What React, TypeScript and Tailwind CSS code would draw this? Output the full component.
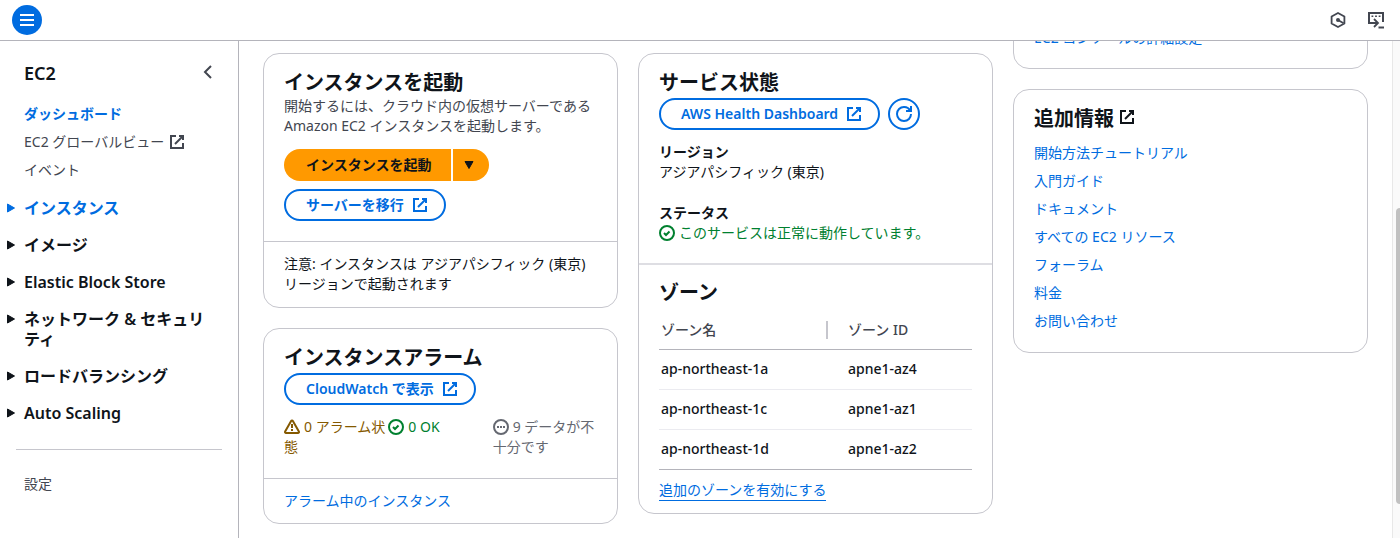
import React from "react";

type IconProps = { className?: string };

function ExternalIcon({ className = "" }: IconProps) {
  return (
    <svg viewBox="0 0 16 16" className={`size-4 shrink-0 ${className}`} fill="none" stroke="currentColor" strokeWidth="2" aria-hidden="true">
      <path d="M10 2h4v4" />
      <path d="m6 10 8-8" />
      <path d="M14 9.05V14H2V2h5" />
    </svg>
  );
}

function CheckIcon() {
  return (
    <svg viewBox="0 0 16 16" className="mr-1 inline-block size-4 align-[-3px]" fill="none" stroke="currentColor" strokeWidth="2" aria-hidden="true">
      <circle cx="8" cy="8" r="7" />
      <path d="m5 8 2 2 3.52-3.52" />
    </svg>
  );
}

function WarningIcon() {
  return (
    <svg viewBox="0 0 16 16" className="mr-1 inline-block size-4 align-[-3px]" fill="none" stroke="currentColor" strokeWidth="2" strokeLinejoin="round" aria-hidden="true">
      <path d="M7.13 1.98 1.14 12.52C.76 13.19 1.24 14 2.01 14h11.98c.77 0 1.25-.81.87-1.48L8.87 1.98a1 1 0 0 0-1.74 0Z" />
      <path d="M8 5v4M8 10v2" />
    </svg>
  );
}

function PendingIcon() {
  return (
    <svg viewBox="0 0 16 16" className="mr-1 inline-block size-4 align-[-3px]" fill="none" stroke="currentColor" strokeWidth="2" aria-hidden="true">
      <circle cx="8" cy="8" r="7" />
      <path d="M4 8h2M7 8h2M10 8h2" />
    </svg>
  );
}

function Card({ children, className = "" }: { children: React.ReactNode; className?: string }) {
  return <section className={`rounded-2xl border border-[#c6c6cd] bg-white ${className}`}>{children}</section>;
}

function CardTitle({ children }: { children: React.ReactNode }) {
  return <h2 className="flex items-center text-xl leading-[26px] font-semibold">{children}</h2>;
}

function OutlineLink({ children }: { children: React.ReactNode }) {
  return (
    <a href="#" className="inline-flex h-8 items-center gap-2 rounded-full border-2 border-[#006ce0] pr-4 pl-5 font-semibold text-[#006ce0]">
      {children}
      <ExternalIcon />
    </a>
  );
}

const sections = [
  { label: "インスタンス", active: true },
  { label: "イメージ" },
  { label: "Elastic Block Store" },
  { label: "ネットワーク & セキュリティ" },
  { label: "ロードバランシング" },
  { label: "Auto Scaling" },
];

const zones = [
  ["ap-northeast-1a", "apne1-az4"],
  ["ap-northeast-1c", "apne1-az1"],
  ["ap-northeast-1d", "apne1-az2"],
];

const resources = ["開始方法チュートリアル", "入門ガイド", "ドキュメント", "すべての EC2 リソース", "フォーラム", "料金", "お問い合わせ"];

function Header() {
  return (
    <header className="flex h-[41px] shrink-0 items-center justify-between border-b border-[#b4b4bb] pr-[15px] pl-3">
      <button aria-label="メニュー" className="flex size-[30px] items-center justify-center rounded-full bg-[#006ce0] text-white">
        <svg viewBox="0 0 16 16" className="size-4" stroke="currentColor" strokeWidth="2" aria-hidden="true">
          <path d="M1 3h14M1 8h14M1 13h14" />
        </svg>
      </button>
      <div className="flex items-center gap-[21px] text-[#424650]">
        <button aria-label="Amazon Q">
          <svg viewBox="0 0 16 16" className="block size-4" fill="none" stroke="currentColor" strokeWidth="1.8" strokeLinejoin="round" aria-hidden="true">
            <path d="M8 1 14.4 4.5v7L8 15l-6.4-3.5v-7Z" />
            <circle cx="8" cy="8" r="2" fill="currentColor" stroke="none" />
            <path d="m8 8 5.6 3.2" />
          </svg>
        </button>
        <button aria-label="CloudShell">
          <svg viewBox="0 0 18 18" className="block size-[18px]" fill="none" stroke="currentColor" strokeWidth="2" aria-hidden="true">
            <path d="M5 12H2V2h14v9" />
            <path d="M4.5 5.2h1.8M8.1 5.2h1.8M11.7 5.2h1.8" strokeWidth="1.6" />
            <path d="M4 12h6M7 8l4 4-4 4" strokeWidth="1.8" />
            <path d="M11.5 16.5H17" />
          </svg>
        </button>
      </div>
    </header>
  );
}

function Sidebar() {
  return (
    <nav aria-label="EC2" className="w-[239px] shrink-0 border-r border-[#b4b4bb]">
      <div className="flex items-start justify-between pt-5 pr-[22px] pl-6">
        <h1 className="text-lg leading-6 font-semibold">EC2</h1>
        <button aria-label="閉じる" className="mt-[3px] text-[#424650]">
          <svg viewBox="0 0 16 16" className="block size-4" fill="none" stroke="currentColor" strokeWidth="2" aria-hidden="true">
            <path d="m11 2-6 6 6 6" />
          </svg>
        </button>
      </div>
      <ul className="mt-[19px] flex flex-col gap-2 pl-6 text-[#424650]">
        <li><a href="#" className="font-semibold text-[#006ce0]">ダッシュボード</a></li>
        <li><a href="#" className="flex items-center gap-[5px]">EC2 グローバルビュー<ExternalIcon /></a></li>
        <li><a href="#">イベント</a></li>
      </ul>
      <ul className="mt-[18px] flex flex-col gap-[17px] pr-6 pl-[7px]">
        {sections.map((s) => (
          <li key={s.label}>
            <button className={`flex items-start gap-[9px] text-left text-base leading-5 font-semibold ${s.active ? "text-[#006ce0]" : ""}`}>
              <svg viewBox="0 0 8 10" className="mt-[5px] h-[10px] w-2 shrink-0" fill="currentColor" stroke="currentColor" strokeLinejoin="round" aria-hidden="true">
                <path d="M.5 1v8l7-4Z" />
              </svg>
              <span>{s.label}</span>
            </button>
          </li>
        ))}
      </ul>
      <hr className="mx-4 mt-[26px] border-[#c6c6cd]" />
      <a href="#" className="mt-6 block pl-6 text-[#424650]">設定</a>
    </nav>
  );
}

function LaunchCard() {
  return (
    <Card>
      <div className="px-5 pt-4 pb-5">
        <CardTitle>インスタンスを起動</CardTitle>
        <p className="text-[#424650]">開始するには、クラウド内の仮想サーバーである Amazon EC2 インスタンスを起動します。</p>
        <div className="mt-[13px] flex h-8 gap-0.5 font-semibold">
          <button className="rounded-l-full bg-[#ff9900] pr-5 pl-[22px]">インスタンスを起動</button>
          <button aria-label="その他のオプション" className="flex w-9 items-center rounded-r-full bg-[#ff9900] pl-[11px]">
            <svg viewBox="0 0 10 8" className="h-2 w-[10px]" fill="currentColor" stroke="currentColor" strokeLinejoin="round" aria-hidden="true">
              <path d="M1 .5h8l-4 7Z" />
            </svg>
          </button>
        </div>
        <div className="mt-2 flex"><OutlineLink>サーバーを移行</OutlineLink></div>
      </div>
      <p className="border-t border-[#c6c6cd] px-5 pt-3 pb-[13px]">注意: インスタンスは アジアパシフィック (東京) リージョンで起動されます</p>
    </Card>
  );
}

function AlarmCard() {
  return (
    <Card>
      <div className="px-5 pt-4 pb-[21px]">
        <CardTitle>インスタンスアラーム</CardTitle>
        <div className="mt-0.5 flex"><OutlineLink>CloudWatch で表示</OutlineLink></div>
        <div className="mt-3 grid grid-cols-3">
          <p className="text-[#855900]"><WarningIcon />0 アラーム状態</p>
          <p className="text-[#00802f]"><CheckIcon />0 OK</p>
          <p className="text-[#656871]"><PendingIcon />9 データが不十分です</p>
        </div>
      </div>
      <div className="border-t border-[#c6c6cd] px-5 py-3">
        <a href="#" className="text-[#006ce0]">アラーム中のインスタンス</a>
      </div>
    </Card>
  );
}

function HealthCard() {
  return (
    <Card>
      <div className="px-5 pt-4 pb-5">
        <CardTitle>サービス状態</CardTitle>
        <div className="mt-0.5 flex gap-2">
          <OutlineLink>AWS Health Dashboard</OutlineLink>
          <button aria-label="更新" className="flex size-8 items-center justify-center rounded-full border-2 border-[#006ce0] text-[#006ce0]">
            <svg viewBox="0 0 16 16" className="size-4" fill="none" stroke="currentColor" strokeWidth="2" aria-hidden="true">
              <path d="M10 5h5V0" />
              <path d="M15 8a6.96 6.96 0 0 1-7 7 6.96 6.96 0 0 1-7-7 6.96 6.96 0 0 1 7-7 6.87 6.87 0 0 1 6.3 4" />
            </svg>
          </button>
        </div>
        <dl className="mt-3">
          <dt className="font-semibold">リージョン</dt>
          <dd>アジアパシフィック (東京)</dd>
          <dt className="mt-[21px] font-semibold">ステータス</dt>
          <dd className="text-[#00802f]"><CheckIcon />このサービスは正常に動作しています。</dd>
        </dl>
      </div>
      <div className="border-t-2 border-[#dedee3] px-5 pt-[15px] pb-3">
        <CardTitle>ゾーン</CardTitle>
        <table className="mt-1.5 w-full table-fixed border-collapse text-left font-medium">
          <thead className="text-[#424650]">
            <tr className="h-[37px] border-b border-[#b4b4bb]">
              <th className="w-[54%] p-0 pl-0.5 font-medium">
                <span className="flex h-[18px] items-center border-r-2 border-[#c6c6cd]">ゾーン名</span>
              </th>
              <th className="p-0 pl-5 font-medium">ゾーン ID</th>
            </tr>
          </thead>
          <tbody>
            {zones.map(([name, id]) => (
              <tr key={name} className="h-10 border-b border-[#ebebf0] last:border-[#b4b4bb]">
                <td className="p-0 pl-0.5">{name}</td>
                <td className="p-0 pl-5">{id}</td>
              </tr>
            ))}
          </tbody>
        </table>
        <a href="#" className="mt-2.5 block w-fit border-b border-[#006ce0] text-[#006ce0]">追加のゾーンを有効にする</a>
      </div>
    </Card>
  );
}

export default function App() {
  return (
    <div className="flex h-screen flex-col overflow-hidden bg-white font-['Noto_Sans','Noto_Sans_CJK_JP',sans-serif] text-sm leading-5 text-[#0f141a]" lang="ja">
      <Header />
      <div className="flex min-h-0 flex-1">
        <Sidebar />
        <main className="grid min-w-0 flex-1 grid-cols-3 items-start gap-5 overflow-hidden px-6 pt-3">
          <div className="flex flex-col gap-5">
            <LaunchCard />
            <AlarmCard />
          </div>
          <HealthCard />
          <div className="-mt-[46px] flex flex-col gap-5">
            <Card className="p-5">
              <a href="#" className="block text-[#006ce0]">EC2 コンソールの詳細設定</a>
            </Card>
            <Card className="px-5 pt-4 pb-[21px]">
              <CardTitle>追加情報<ExternalIcon className="mb-1 ml-[5px]" /></CardTitle>
              <ul className="mt-[11px] flex flex-col gap-2">
                {resources.map((r) => (
                  <li key={r}><a href="#" className="text-[#006ce0]">{r}</a></li>
                ))}
              </ul>
            </Card>
          </div>
        </main>
        <div className="flex w-2 shrink-0 flex-col overflow-hidden border-l border-[#e8e8e8] bg-[#fafafa] pt-[167px] pl-[3px]">
          <div className="h-[296px] w-2 shrink-0 rounded-full bg-[#c1c1c1]" />
        </div>
      </div>
    </div>
  );
}
